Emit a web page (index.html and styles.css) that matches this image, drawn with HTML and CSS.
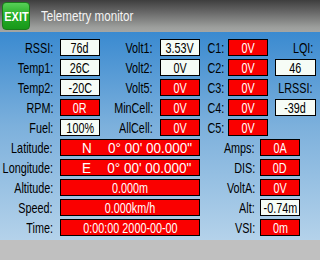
FILE: index.html
```html
<!DOCTYPE html>
<html>
<head>
<meta charset="utf-8">
<link rel="stylesheet" href="styles.css">
</head>
<body>
<div class="screen">
  <header class="header">
    <div class="exit"><span class="t">EXIT</span></div>
    <div class="title"><span class="t">Telemetry monitor</span></div>
  </header>
  <main class="content">
    <div class="grid-top">
      <div class="lbl l1"><span class="t">RSSI:</span></div><div class="box w"><span class="t">76d</span></div>
      <div class="lbl l2"><span class="t">Volt1:</span></div><div class="box w"><span class="t">3.53V</span></div>
      <div class="lbl l3"><span class="t">C1:</span></div><div class="box r"><span class="t">0V</span></div>
      <div class="lbl l4 c8"><span class="t">LQI:</span></div>

      <div class="lbl l1"><span class="t">Temp1:</span></div><div class="box w"><span class="t">26C</span></div>
      <div class="lbl l2"><span class="t">Volt2:</span></div><div class="box w"><span class="t">0V</span></div>
      <div class="lbl l3"><span class="t">C2:</span></div><div class="box r"><span class="t">0V</span></div>
      <div class="box w c8"><span class="t">46</span></div>

      <div class="lbl l1"><span class="t">Temp2:</span></div><div class="box w"><span class="t">-20C</span></div>
      <div class="lbl l2"><span class="t">Volt5:</span></div><div class="box r"><span class="t">0V</span></div>
      <div class="lbl l3"><span class="t">C3:</span></div><div class="box r"><span class="t">0V</span></div>
      <div class="lbl l4 c8"><span class="t">LRSSI:</span></div>

      <div class="lbl l1"><span class="t">RPM:</span></div><div class="box r"><span class="t">0R</span></div>
      <div class="lbl l2"><span class="t">MinCell:</span></div><div class="box r"><span class="t">0V</span></div>
      <div class="lbl l3"><span class="t">C4:</span></div><div class="box r"><span class="t">0V</span></div>
      <div class="box w c8"><span class="t">-39d</span></div>

      <div class="lbl l1"><span class="t">Fuel:</span></div><div class="box w"><span class="t">100%</span></div>
      <div class="lbl l2"><span class="t">AllCell:</span></div><div class="box r"><span class="t">0V</span></div>
      <div class="lbl l3"><span class="t">C5:</span></div><div class="box r"><span class="t">0V</span></div>
    </div>
    <div class="grid-bottom">
      <div class="lbl l1"><span class="t">Latitude:</span></div>
      <div class="box r wide coordbox"><span class="t coord"><span>N</span><span>0° 00' 00.000"</span></span></div>
      <div class="lbl lr"><span class="t">Amps:</span></div><div class="box r"><span class="t">0A</span></div>

      <div class="lbl l1"><span class="t">Longitude:</span></div>
      <div class="box r wide coordbox"><span class="t coord"><span>E</span><span>0° 00' 00.000"</span></span></div>
      <div class="lbl lr"><span class="t">DIS:</span></div><div class="box r"><span class="t">0D</span></div>

      <div class="lbl l1"><span class="t">Altitude:</span></div><div class="box r wide"><span class="t">0.000m</span></div>
      <div class="lbl lr"><span class="t">VoltA:</span></div><div class="box r"><span class="t">0V</span></div>

      <div class="lbl l1"><span class="t">Speed:</span></div><div class="box r wide"><span class="t">0.000km/h</span></div>
      <div class="lbl lr"><span class="t">Alt:</span></div><div class="box w"><span class="t">-0.74m</span></div>

      <div class="lbl l1"><span class="t">Time:</span></div><div class="box r wide"><span class="t">0:00:00 2000-00-00</span></div>
      <div class="lbl lr"><span class="t">VSI:</span></div><div class="box r"><span class="t">0m</span></div>
    </div>
  </main>
  <footer class="footer"></footer>
</div>
</body>
</html>
```

FILE: styles.css
```css
* { box-sizing: border-box; }
html, body { margin: 0; padding: 0; }
body {
  width: 320px;
  height: 260px;
  overflow: hidden;
  font-family: "Liberation Sans", Arial, sans-serif;
  font-size: 15px;
  color: #000;
}
.t {
  display: inline-block;
  white-space: pre;
  transform: scaleX(0.74);
  transform-origin: center;
}
.screen {
  width: 320px;
  height: 260px;
  display: flex;
  flex-direction: column;
}
.header {
  height: 32px;
  flex: none;
  background: linear-gradient(to bottom, #3e3e3e 0%, #6a6a6a 40%, #9c9e9c 85%, #a4a6a4 100%);
  display: flex;
  align-items: center;
  padding-left: 2px;
}
.exit {
  width: 28px;
  height: 28px;
  border-radius: 4px;
  background: linear-gradient(to bottom, #58d058 0%, #28b028 45%, #18981a 100%);
  border: 1px solid #1a7a1a;
  color: #fff;
  font-weight: bold;
  font-size: 13px;
  display: flex;
  align-items: center;
  justify-content: center;
}
.exit .t { transform: scaleX(0.84); }
.title {
  margin-left: 11px;
  color: #f4f4f4;
  font-size: 14px;
}
.title .t { transform: scaleX(0.83); transform-origin: left center; }
.content {
  height: 208px;
  flex: none;
  background: linear-gradient(to bottom, #3a8ad0 0%, #7cb0dc 45%, #b4d2ea 100%);
  padding-top: 7px;
  display: flex;
  flex-direction: column;
  gap: 3px;
}
.footer {
  flex: 1;
  background: #c0c0c0;
}
.grid-top {
  display: grid;
  grid-template-columns: 60px 40px 60px 40px 28px 40px 7px 41px;
  grid-auto-rows: 17px;
  row-gap: 3px;
}
.grid-bottom {
  display: grid;
  grid-template-columns: 60px 140px 60px 40px;
  grid-auto-rows: 17px;
  row-gap: 3px;
}
.lbl {
  display: flex;
  justify-content: flex-end;
  align-items: center;
  line-height: 17px;
  white-space: nowrap;
  min-width: 0;
}
.lbl .t { transform: scaleX(0.72); transform-origin: right center; flex: none; }
.l1 { padding-right: 7px; }
.l2 { padding-right: 7px; }
.l3 { padding-right: 4px; }
.l4 { padding-right: 3px; }
.lr { padding-right: 5px; }
.c8 { grid-column: 8; }
.box {
  display: flex;
  justify-content: center;
  align-items: center;
  border: 1px solid #000;
  line-height: 15px;
  white-space: nowrap;
  min-width: 0;
}
.box .t { transform: scaleX(0.72); flex: none; }
.coordbox { padding-left: 14px; }
.box .coord { display: inline-flex; gap: 18px; transform: scaleX(0.9); }
.w { background: #f6fcf6; color: #000; }
.r { background: #fa0000; color: #fff; }
```
